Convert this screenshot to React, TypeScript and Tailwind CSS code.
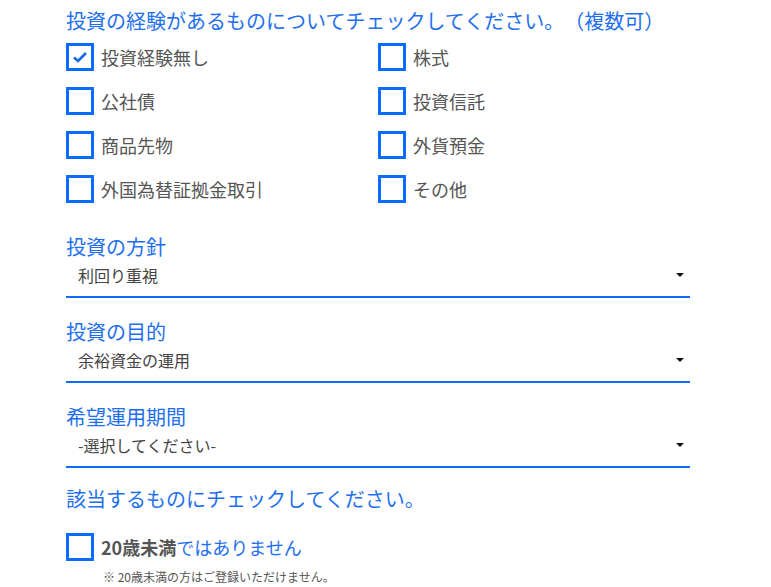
import React from 'react';

const font = { fontFamily: '"Noto Sans CJK JP", "Noto Sans", sans-serif' };

const experiences = [
  { label: '投資経験無し', checked: true },
  { label: '株式', checked: false },
  { label: '公社債', checked: false },
  { label: '投資信託', checked: false },
  { label: '商品先物', checked: false },
  { label: '外貨預金', checked: false },
  { label: '外国為替証拠金取引', checked: false },
  { label: 'その他', checked: false },
];

const selects = [
  { label: '投資の方針', value: '利回り重視' },
  { label: '投資の目的', value: '余裕資金の運用' },
  { label: '希望運用期間', value: '-選択してください-' },
];

function Box({ checked }: { checked: boolean }) {
  return (
    <span className="flex h-[28px] w-[28px] shrink-0 items-center justify-center border-[3px] border-[#0a6cff] bg-white">
      {checked && (
        <svg width="16" height="14" viewBox="0 0 16 14">
          <polyline points="2,7.5 6,11 14,3" fill="none" stroke="#1a66e8" strokeWidth="2.6" />
        </svg>
      )}
    </span>
  );
}

export default function App() {
  return (
    <div className="min-h-[587px] bg-white pl-[66px] pt-[7px] [text-spacing-trim:space-all]" style={font}>
      <div className="w-[624px]">
        <h2 className="text-[20px] leading-[28px] text-[#1e6ff0]">
          投資の経験があるものについてチェックしてください。（複数可）
        </h2>

        <div className="grid grid-cols-[312px_1fr]">
          {experiences.map((e) => (
            <label key={e.label} className="flex h-[44px] items-center gap-[7px]">
              <Box checked={e.checked} />
              <span className="text-[18px] leading-[26px] text-[#555]">{e.label}</span>
            </label>
          ))}
        </div>

        <div className="mt-[22px] flex flex-col gap-[20px]">
          {selects.map((s) => (
            <div key={s.label}>
              <div className="text-[20px] leading-[28px] text-[#1e6ff0]">{s.label}</div>
              <div className="flex h-[37px] items-center justify-between border-b-2 border-[#0a6cff] pb-[8px] pl-[12px] pr-[6px]">
                <span className="text-[16px] text-[#444]">{s.value}</span>
                <span className="h-0 w-0 border-x-[4px] border-t-[4px] border-x-transparent border-t-[#111]" />
              </div>
            </div>
          ))}
        </div>

        <h2 className="mt-[17px] text-[20px] leading-[28px] text-[#1e6ff0]">
          該当するものにチェックしてください。
        </h2>

        <label className="mt-[20px] flex items-center gap-[7px]">
          <Box checked={false} />
          <span className="text-[18px] leading-[26px]">
            <span className="font-semibold text-[#555]">20歳未満</span>
            <span className="text-[#1e6ff0]">ではありません</span>
          </span>
        </label>
        <p className="mt-[8px] pl-[37px] text-[12px] leading-[16px] text-[#555]">
          ※ 20歳未満の方はご登録いただけません。
        </p>
      </div>
    </div>
  );
}
